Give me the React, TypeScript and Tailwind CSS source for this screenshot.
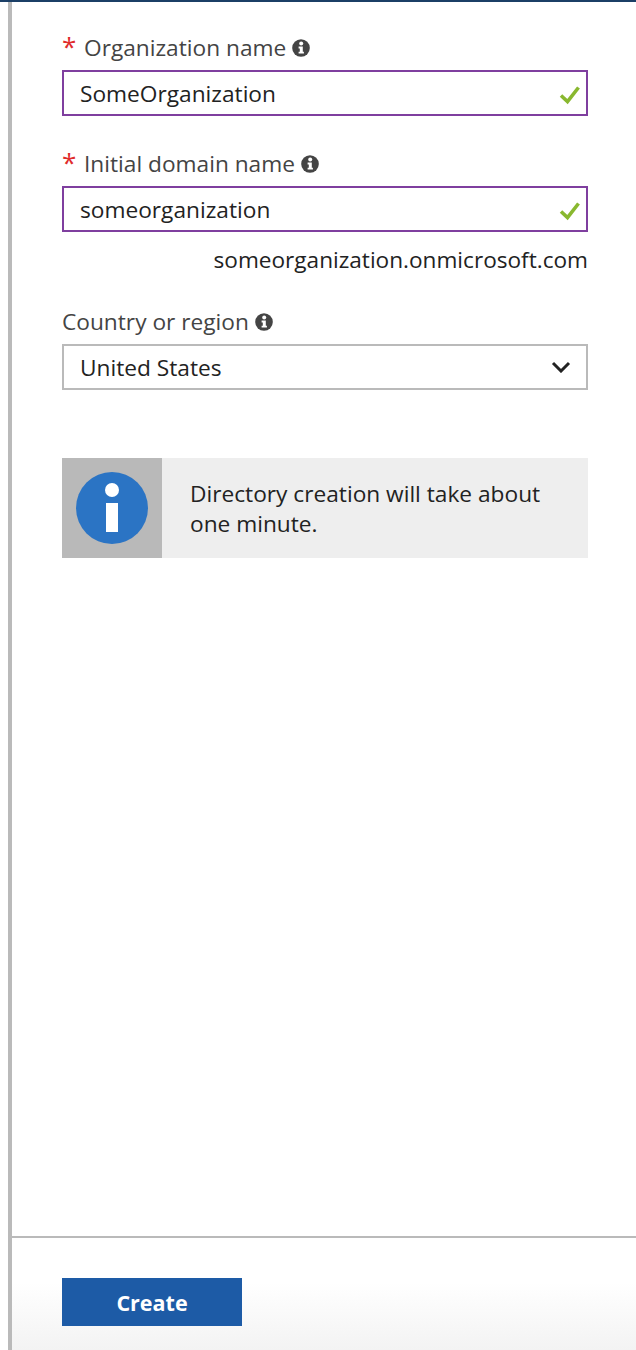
import React from 'react';

const fontClass = "font-['Open_Sans','Noto_Sans',sans-serif]";

const InfoDot = () => (
  <svg width="18" height="18" viewBox="0 0 18 18" className="shrink-0">
    <circle cx="9" cy="9" r="8.8" fill="#444" />
    <circle cx="9.2" cy="4.6" r="2" fill="#fff" />
    <path d="M6.6 7.5h4.2v5.2h1.1v1.9H6.6v-1.9h1.2v-3.3H6.6z" fill="#fff" />
  </svg>
);

const Check = () => (
  <svg width="22" height="20" viewBox="0 0 22 20" className="absolute right-[5px] top-[13px]">
    <path d="M2 10.5l6.5 6L19.5 2.5" fill="none" stroke="#89b82f" strokeWidth="3.6" />
  </svg>
);

const Label = ({ text, required }: { text: string; required?: boolean }) => (
  <div className="flex items-center h-[34px] mb-[5px] text-[22.7px] text-[#444]">
    {required && <span className="text-[#e02b2b] text-[26px] w-[22px] leading-none -mt-1">*</span>}
    <span className="mr-[6px]">{text}</span>
    <InfoDot />
  </div>
);

const TextField = ({ value }: { value: string }) => (
  <div className="relative h-[46px] border-2 border-[#7f3f9f] flex items-center pl-4 pt-[2px] text-[22.7px] text-[#222]">
    {value}
    <Check />
  </div>
);

const App: React.FC = () => {
  return (
    <div className={`h-[1350px] w-[636px] bg-white flex flex-col overflow-hidden ${fontClass}`}>
      <div className="h-[2px] bg-[#1b3f66] shrink-0" />
      <div className="flex-1 ml-2 border-l-4 border-[#bababa] flex flex-col">
        <div className="flex-1 pl-[50px] pr-[48px] pt-[29px]">
          <Label text="Organization name" required />
          <TextField value="SomeOrganization" />
          <div className="mt-[31px]">
            <Label text="Initial domain name" required />
          </div>
          <TextField value="someorganization" />
          <div className="text-right text-[22.6px] text-[#222] h-[28px] mt-[14px] leading-[28px]">
            someorganization.onmicrosoft.com
          </div>
          <div className="mt-[31px]">
            <Label text="Country or region" />
          </div>
          <div className="h-[46px] border-2 border-[#bababa] flex items-center justify-between pl-4 pr-[15px] text-[22.7px] text-[#222]">
            <span className="pt-[2px]">United States</span>
            <svg width="20" height="12" viewBox="0 0 20 12">
              <path d="M2 2l8 8 8-8" fill="none" stroke="#222" strokeWidth="3" />
            </svg>
          </div>
          <div className="mt-[68px] h-[100px] flex bg-[#eeeeee]">
            <div className="w-[100px] bg-[#b9b9b9] flex items-center justify-center">
              <svg width="72" height="72" viewBox="0 0 72 72">
                <circle cx="36" cy="36" r="36" fill="#2b74c4" />
                <circle cx="36" cy="18" r="7" fill="#fff" />
                <rect x="30" y="31" width="12" height="29" fill="#fff" />
              </svg>
            </div>
            <div className="pl-7 pt-[21px] text-[22.7px] leading-[30px] text-[#222]">
              Directory creation will take about
              <br />
              one minute.
            </div>
          </div>
        </div>
        <div className="h-[114px] border-t-2 border-[#bababa] pl-[50px] pt-10 bg-gradient-to-b from-white from-40% to-[#f3f3f3]">
          <button className="w-[180px] h-[48px] bg-[#1d5ba6] text-white font-bold text-[21.5px] pt-[2px] flex items-center justify-center">
            Create
          </button>
        </div>
      </div>
    </div>
  );
};

export default App;
